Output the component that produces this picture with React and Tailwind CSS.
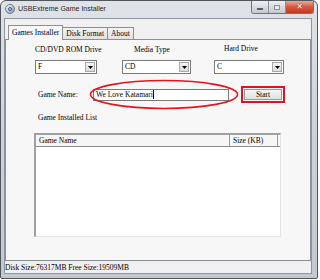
import React from "react";

const serif = { fontFamily: '"Liberation Serif", "Times New Roman", serif' };

// small combo box used for the three drive/media pickers
const Combo = ({ value, width }) => (
  <div
    className={`relative h-[14px] bg-white border border-[#7a7a7a] flex items-center ${width}`}
  >
    <span className="pl-[2px] text-[7.5px] leading-none text-black">{value}</span>
    <div className="absolute right-[1px] top-[1px] bottom-[1px] w-[10px] bg-gradient-to-b from-[#f4f4f4] to-[#dcdcdc] border border-[#a8a8a8] flex items-center justify-center">
      <svg width="5" height="3" viewBox="0 0 5 3">
        <path d="M0 0h5L2.5 3z" fill="#000" />
      </svg>
    </div>
  </div>
);

const App = () => {
  return (
    <div className="w-[320px] h-[280px] bg-white" style={serif}>
      <div className="w-[318px] h-[279px] border border-[#50555c] rounded-t-[6px] rounded-b-[2px] bg-gradient-to-b from-[#dfe3e8] via-[#cdd2d8] to-[#c4c9cf] flex flex-col">
        {/* title bar */}
        <div className="h-[17px] flex items-start relative">
          <div className="mt-[3px] ml-[4px] w-[10px] h-[10px] rounded-full bg-gradient-to-br from-[#ffffff] to-[#8a97a8] border border-[#6b7685] flex items-center justify-center">
            <div className="w-[4px] h-[4px] rounded-full border border-[#2d5a9a]" />
          </div>
          <span
            className="ml-[3px] mt-[3px] text-[7px] leading-[10px] text-[#1e1e1e]"
            style={{ fontFamily: '"Liberation Sans", Arial, sans-serif' }}
          >
            USBExtreme Game Installer
          </span>
          <div className="absolute right-[3px] top-0 flex h-[13px] rounded-b-[3px] overflow-hidden border border-t-0 border-[#6d737b]">
            <div className="w-[17px] bg-gradient-to-b from-[#eef0f3] to-[#c4c9d0] border-r border-[#8b9098] flex items-end justify-center pb-[3px]">
              <div className="w-[6px] h-[2px] bg-white border border-[#5a5f66]" />
            </div>
            <div className="w-[17px] bg-gradient-to-b from-[#eef0f3] to-[#c4c9d0] border-r border-[#8b9098] flex items-center justify-center">
              <div className="w-[6px] h-[5px] border border-[#8a9098] bg-[#e8eaed]" />
            </div>
            <div className="w-[27px] bg-gradient-to-b from-[#e9a797] via-[#d2573d] to-[#c43a22] flex items-center justify-center">
              <span
                className="text-white text-[8px] font-bold leading-none"
                style={{ fontFamily: '"DejaVu Sans", sans-serif', textShadow: "0 0 1px #600" }}
              >
                ✕
              </span>
            </div>
          </div>
        </div>

        {/* client area */}
        <div className="ml-[3px] w-[308px] h-[256px] bg-[#f0f0f0] border border-[#8f959c] flex flex-col">
          {/* tabs */}
          <div className="flex items-end h-[20px] pl-[3px]">
            <div className="h-[15px] px-[3px] border border-b-0 border-[#8c8f96] bg-[#f7f7f7] text-[7.5px] leading-[14px] text-black relative top-[1px] z-10">
              Games Installer
            </div>
            <div className="h-[12px] px-[3px] border border-b-0 border-l-0 border-[#8c8f96] bg-gradient-to-b from-[#f3f3f3] to-[#e2e2e2] text-[7.5px] leading-[12px] text-black">
              Disk Format
            </div>
            <div className="h-[12px] px-[3px] border border-b-0 border-l-0 border-[#8c8f96] bg-gradient-to-b from-[#f3f3f3] to-[#e2e2e2] text-[7.5px] leading-[12px] text-black">
              About
            </div>
          </div>

          {/* panel */}
          <div className="h-[222px] border border-[#8c8f96] bg-[#f7f7f7] pl-[29px] pt-[4px] flex flex-col relative">
            <div className="flex h-[11px] text-[7.5px] leading-[11px] text-black">
              <div className="w-[99px]">CD/DVD ROM Drive</div>
              <div className="w-[90px]">Media Type</div>
              <div className="relative -top-[1px]">Hard Drive</div>
            </div>

            <div className="flex mt-[5px]">
              <Combo value="F" width="w-[62px]" />
              <div className="ml-[25px]">
                <Combo value="CD" width="w-[69px]" />
              </div>
              <div className="ml-[23px]">
                <Combo value="C" width="w-[70px]" />
              </div>
            </div>

            <div className="flex items-center mt-[12px] h-[17px] relative">
              <div className="ml-[3px] w-[55px] text-[7.5px] text-black leading-none">Game Name:</div>
              <div className="w-[136px] h-[12px] bg-white border border-[#7a7a7a] flex items-center pl-[2px]">
                <span className="text-[7.5px] leading-none text-black">We Love Katamari</span>
                <span className="w-[1px] h-[9px] bg-black" />
              </div>
              <div className="ml-[12px] w-[44px] h-[17px] border-2 border-[#e0141c] p-[1px] flex">
                <div className="flex-1 bg-gradient-to-b from-[#f6f6f6] to-[#e0e0e0] border border-[#9a9a9a] flex items-center justify-center text-[7.5px] text-black leading-none">
                  Start
                </div>
              </div>
              {/* hand-drawn highlight around the name box */}
              <svg
                className="absolute left-[54px] -top-[7px] pointer-events-none"
                width="150"
                height="31"
                viewBox="0 0 150 31"
              >
                <ellipse cx="75" cy="15.5" rx="73.5" ry="14" fill="none" stroke="#e3141c" strokeWidth="1.6" />
              </svg>
            </div>

            <div className="mt-[9px] ml-[3px] h-[11px] text-[7.5px] leading-[11px] text-black">
              Game Installed List
            </div>

            <div className="mt-[10px] -ml-[1px] w-[247px] h-[104px] bg-white border-t-2 border-l-2 border-[#a0a0a0] border-r border-b border-r-[#e4e4e4] border-b-[#e4e4e4] flex flex-col">
              <div className="flex h-[12px] bg-[#f6f6f6] border-b border-[#8a8a8a] text-[7.5px] leading-[11px] text-black">
                <div className="w-[194px] pl-[3px] border-r border-[#9a9a9a]">Game Name</div>
                <div className="w-[48px] pl-[3px] border-r border-[#9a9a9a]">Size (KB)</div>
              </div>
            </div>
          </div>

          <div className="pt-[2px] text-[7.5px] leading-[10px] text-black">
            Disk Size:76317MB Free Size:19509MB
          </div>
        </div>
      </div>
    </div>
  );
};

export default App;
